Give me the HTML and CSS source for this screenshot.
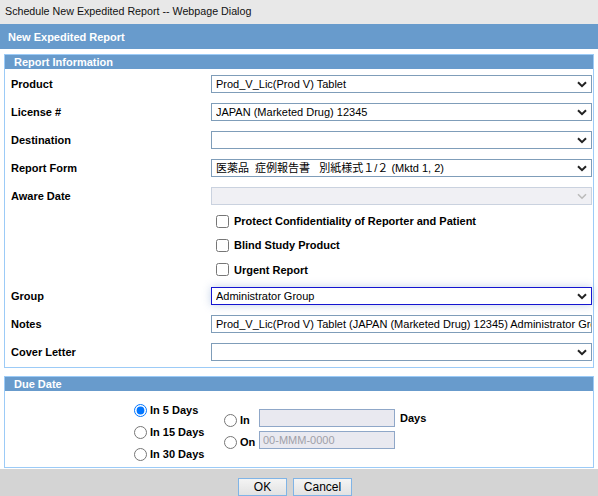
FILE: index.html
```
<!doctype html>
<html lang="en">
<head>
<meta charset="utf-8">
<title>Schedule New Expedited Report</title>
<link rel="stylesheet" href="styles.css">
</head>
<body>
<div class="titlebar">Schedule New Expedited Report -- Webpage Dialog</div>
<div class="page-head">New Expedited Report</div>
<div class="main">
	<div class="section">
		<div class="sec-head">Report Information</div>
		<div class="form">
			<label class="lbl">Product</label>
			<div class="sel">
				<select><option>Prod_V_Lic(Prod V) Tablet</option></select>
				<svg class="chev" width="10" height="7" viewBox="0 0 10 7"><path d="M1 1.2l4 4 4-4" fill="none" stroke="#222" stroke-width="2"/></svg>
			</div>

			<label class="lbl">License #</label>
			<div class="sel">
				<select><option>JAPAN (Marketed Drug) 12345</option></select>
				<svg class="chev" width="10" height="7" viewBox="0 0 10 7"><path d="M1 1.2l4 4 4-4" fill="none" stroke="#222" stroke-width="2"/></svg>
			</div>

			<label class="lbl">Destination</label>
			<div class="sel">
				<select><option></option></select>
				<svg class="chev" width="10" height="7" viewBox="0 0 10 7"><path d="M1 1.2l4 4 4-4" fill="none" stroke="#222" stroke-width="2"/></svg>
			</div>

			<label class="lbl">Report Form</label>
			<div class="sel">
				<select><option>医薬品&nbsp;&nbsp;症例報告書&nbsp;&nbsp;&nbsp;別紙様式１/２&nbsp;(Mktd 1, 2)</option></select>
				<svg class="chev" width="10" height="7" viewBox="0 0 10 7"><path d="M1 1.2l4 4 4-4" fill="none" stroke="#222" stroke-width="2"/></svg>
			</div>

			<label class="lbl">Aware Date</label>
			<div class="sel off">
				<select disabled><option></option></select>
				<svg class="chev" width="10" height="7" viewBox="0 0 10 7"><path d="M1 1.2l4 4 4-4" fill="none" stroke="#bbb" stroke-width="1.6"/></svg>
			</div>

			<div class="checks">
				<label class="chk"><input type="checkbox"> Protect Confidentiality of Reporter and Patient</label>
				<label class="chk"><input type="checkbox"> Blind Study Product</label>
				<label class="chk"><input type="checkbox"> Urgent Report</label>
			</div>

			<label class="lbl">Group</label>
			<div class="sel focus">
				<select><option>Administrator Group</option></select>
				<svg class="chev" width="10" height="7" viewBox="0 0 10 7"><path d="M1 1.2l4 4 4-4" fill="none" stroke="#222" stroke-width="2"/></svg>
			</div>

			<label class="lbl">Notes</label>
			<div class="sel">
				<input class="txt" type="text" value="Prod_V_Lic(Prod V) Tablet (JAPAN (Marketed Drug) 12345) Administrator Group">
			</div>

			<label class="lbl">Cover Letter</label>
			<div class="sel">
				<select><option></option></select>
				<svg class="chev" width="10" height="7" viewBox="0 0 10 7"><path d="M1 1.2l4 4 4-4" fill="none" stroke="#222" stroke-width="2"/></svg>
			</div>
		</div>
	</div>

	<div class="section due">
		<div class="sec-head">Due Date</div>
		<div class="due-body">
			<div class="col1">
				<label class="rad"><input type="radio" name="due" checked>In 5 Days</label>
				<label class="rad"><input type="radio" name="due">In 15 Days</label>
				<label class="rad"><input type="radio" name="due">In 30 Days</label>
			</div>
			<div class="col2">
				<div class="due-row">
					<label class="rad low"><input type="radio" name="due">In</label>
					<input class="box" type="text" disabled>
					<span class="days">Days</span>
				</div>
				<div class="due-row">
					<label class="rad low"><input type="radio" name="due">On</label>
					<input class="box" type="text" disabled placeholder="00-MMM-0000">
				</div>
			</div>
		</div>
	</div>
</div>
<div class="footer">
	<button class="btn ok">OK</button>
	<button class="btn cancel">Cancel</button>
</div>
</body>
</html>
```

FILE: styles.css
```
html,body{margin:0;padding:0}
body{width:598px;height:496px;overflow:hidden;background:#fff;font:11px "Liberation Sans",Arial,"Noto Sans CJK JP",sans-serif;color:#000}
.titlebar{height:24px;line-height:23px;padding-left:5px;background:#e8e8e8;font-size:10.7px;color:#111}
.page-head{height:25px;line-height:26px;padding-left:8px;background:#689bcc;color:#fff;font-weight:bold}
.main{padding:5px 4px 0 4px}
.section{border:1px solid #9ccbf7}
.sec-head{height:14px;line-height:14px;padding-left:9px;background:#689bcc;color:#fff;font-weight:bold}
.form{display:grid;grid-template-columns:206px 1fr;grid-auto-rows:minmax(28px,auto);padding:1px 1px 1px 0;align-items:center}
.lbl{padding-left:6px;font-weight:bold;align-self:center}
.sel{position:relative;height:18px}
.sel select,.sel .txt{display:block;width:100%;height:18px;box-sizing:border-box;margin:0;border:1px solid #7f9db9;border-radius:0;background:#fff;font:11px "Liberation Sans",Arial,"Noto Sans CJK JP",sans-serif;color:#000;-webkit-appearance:none;appearance:none;outline:none}
.sel select{padding:0 20px 0 4px}
.sel .txt{padding:0 0 0 4px}
.chev{position:absolute;right:5px;top:6px;pointer-events:none}
.sel.off select{background:#ebebf0;border-color:#b4c0d2}
.sel.focus select{border-color:#1515d0;box-shadow:0 0 8px rgba(120,150,200,.45)}
.checks{grid-column:1/-1;height:73px;padding-left:206px;display:grid;grid-template-rows:24px 24px 25px;margin-top:-1px}
.chk{display:flex;align-items:center;font-weight:bold;padding-left:5px}
.chk input{width:13px;height:13px;margin:0 5px 0 0}
.due{margin-top:8px}
.due-body{display:flex;height:76px;padding-left:129px}
.col1{width:90px;padding-top:8px}
.col1 .rad{height:22px}
.rad{display:flex;align-items:center;font-weight:bold}
.rad input{width:13px;height:13px;margin:0 3px 0 0}
.col2{padding-top:16px}
.due-row{display:flex;align-items:center;height:22px}
.rad.low{width:35px;padding-top:4px}
.box{width:136px;height:18px;box-sizing:border-box;margin:0;padding:0 3px;border:1px solid #8fa7c8;background:#e9e9f0;font:11px "Liberation Sans",Arial,sans-serif}
.box::placeholder{color:#a0a0a8}
.days{margin-left:5px;font-weight:bold}
.footer{height:28px;margin-top:1px;background:#d4d4d4;display:flex;justify-content:center;gap:6px;padding:9px 0 0 0;box-sizing:border-box}
.btn{height:18px;margin:0;padding:0;border:1px solid #80b4e6;background:linear-gradient(#f4f4f4,#e2e2e2);font:12px "Liberation Sans",Arial,sans-serif;color:#000}
.ok{width:49px;margin-left:-8px}
.cancel{width:59px}
```
